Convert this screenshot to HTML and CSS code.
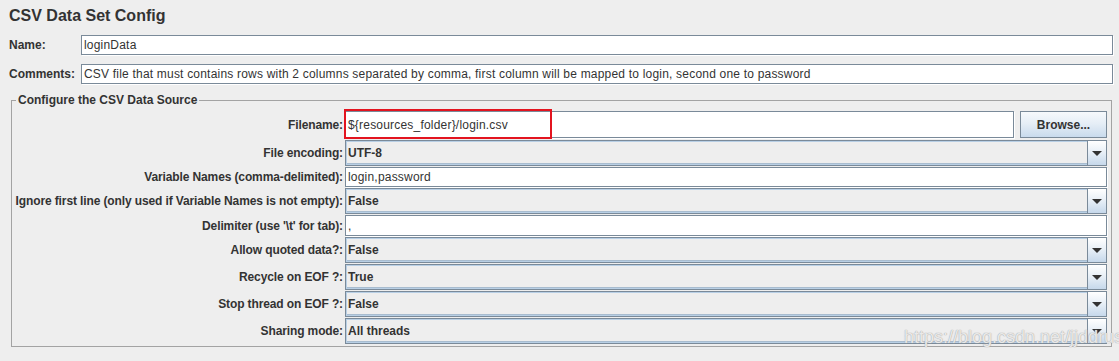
FILE: index.html
```html
<!DOCTYPE html>
<html lang="en">
<head>
    <meta charset="UTF-8">
    <title>CSV Data Set Config</title>
    <link rel="stylesheet" href="styles.css">
</head>
<body>
    <div class="panel">
        <h1>CSV Data Set Config</h1>

        <div class="top-row">
            <label class="top-label">Name:</label>
            <div class="text-field">loginData</div>
        </div>
        <div class="top-row comments">
            <label class="top-label">Comments:</label>
            <div class="text-field">CSV file that must contains rows with 2 columns separated by comma, first column will be mapped to login, second one to password</div>
        </div>

        <fieldset class="group">
            <legend>Configure the CSV Data Source</legend>
            <div class="form-grid">
                <label class="field-label row-file">Filename:</label>
                <div class="file-cell row-file">
                    <div class="text-field file-input">${resources_folder}/login.csv</div>
                    <div class="highlight"></div>
                    <button class="browse-btn">Browse...</button>
                </div>

                <label class="field-label row-combo">File encoding:</label>
                <div class="combo row-combo"><span class="combo-value">UTF-8</span><span class="combo-arrow"></span></div>

                <label class="field-label row-text">Variable Names (comma-delimited):</label>
                <div class="text-field row-text">login,password</div>

                <label class="field-label row-combo">Ignore first line (only used if Variable Names is not empty):</label>
                <div class="combo row-combo"><span class="combo-value">False</span><span class="combo-arrow"></span></div>

                <label class="field-label row-text delim">Delimiter (use '\t' for tab):</label>
                <div class="text-field row-text delim">,</div>

                <label class="field-label row-combo">Allow quoted data?:</label>
                <div class="combo row-combo"><span class="combo-value">False</span><span class="combo-arrow"></span></div>

                <label class="field-label row-combo">Recycle on EOF ?:</label>
                <div class="combo row-combo"><span class="combo-value">True</span><span class="combo-arrow"></span></div>

                <label class="field-label row-combo">Stop thread on EOF ?:</label>
                <div class="combo row-combo"><span class="combo-value">False</span><span class="combo-arrow"></span></div>

                <label class="field-label row-combo">Sharing mode:</label>
                <div class="combo row-combo"><span class="combo-value">All threads</span><span class="combo-arrow"></span></div>
            </div>
        </fieldset>
    </div>

    <div class="watermark">https://blog.csdn.net/jjddrushi</div>
</body>
</html>
```

FILE: styles.css
```css
body {
    margin: 0;
    background: #eeeeee;
    font-family: "Liberation Sans", Arial, sans-serif;
    font-size: 12px;
    color: #333333;
    position: relative;
    height: 361px;
    overflow: hidden;
}

.panel {
    padding: 6px 6px 0 9px;
}

h1 {
    margin: 0 0 9px 0;
    font-size: 16px;
    line-height: 20px;
    font-weight: bold;
    color: #333333;
}

.top-row {
    display: grid;
    grid-template-columns: 72px 1fr;
    align-items: center;
    height: 20px;
}

.top-row.comments {
    margin-top: 9px;
}

.top-label {
    font-weight: bold;
}

.text-field {
    background: #ffffff;
    border: 1px solid #7a8a99;
    box-shadow: 1px 1px 0 #ffffff;
    height: 100%;
    box-sizing: border-box;
    padding: 0 2px;
    display: flex;
    align-items: center;
    white-space: nowrap;
    overflow: hidden;
    color: #333333;
    letter-spacing: 0.2px;
}

.group {
    margin: 9px 1px 0 2px;
    padding: 3px 4px 2px 0;
    border: 1px solid #a3a3a3;
    min-width: 0;
}

.group legend {
    margin-left: 4px;
    padding: 0 2px;
    font-weight: bold;
    line-height: 14px;
}

.form-grid {
    display: grid;
    grid-template-columns: 331px 1fr;
    column-gap: 2px;
    row-gap: 1px;
}

.field-label {
    font-weight: bold;
    text-align: right;
    display: flex;
    align-items: center;
    justify-content: flex-end;
    white-space: nowrap;
    letter-spacing: -0.12px;
}

.row-file {
    height: 29px;
}

.row-combo {
    height: 26px;
}

.row-text {
    height: 20px;
}

.row-text.delim {
    height: 21px;
}

.file-cell {
    display: flex;
    gap: 6px;
    position: relative;
    padding: 1px 0 1px 0;
    box-sizing: border-box;
}

.file-input {
    flex: 1;
}

.highlight {
    position: absolute;
    left: -1px;
    top: -1px;
    width: 208px;
    height: 30px;
    border: 2px solid #e3141f;
    box-sizing: border-box;
}

.browse-btn {
    width: 87px;
    height: 100%;
    margin: 0;
    font-family: "Liberation Sans", Arial, sans-serif;
    font-size: 12px;
    font-weight: bold;
    color: #333333;
    border: 1px solid #7a8a99;
    background: linear-gradient(#f6f9fc, #e6eef6 45%, #c9dbed);
    padding: 0;
}

.combo {
    display: flex;
    box-sizing: border-box;
    border: 1px solid #7a8a99;
    box-shadow: inset 0 0 0 1px #b8cfe5, inset 0 -1px 0 1px #a8bccf;
    background: #eeeeee;
}

.combo-value {
    flex: 1;
    display: flex;
    align-items: center;
    padding-left: 2px;
    font-weight: bold;
}

.combo-arrow {
    width: 18px;
    border-left: 1px solid #7a8a99;
    background: linear-gradient(#ffffff, #e6eef6 50%, #c6d8eb);
    display: flex;
    align-items: center;
    justify-content: center;
}

.combo-arrow::after {
    content: "";
    border-left: 5px solid transparent;
    border-right: 5px solid transparent;
    border-top: 5px solid #333333;
}

.watermark {
    position: absolute;
    left: 904px;
    top: 327px;
    font-family: "Liberation Sans", Arial, sans-serif;
    font-size: 18px;
    color: rgba(255, 255, 255, 0.75);
    text-shadow: 0 0 1px #a8a8a8, 0 0 1px #a8a8a8;
    white-space: nowrap;
}
```
